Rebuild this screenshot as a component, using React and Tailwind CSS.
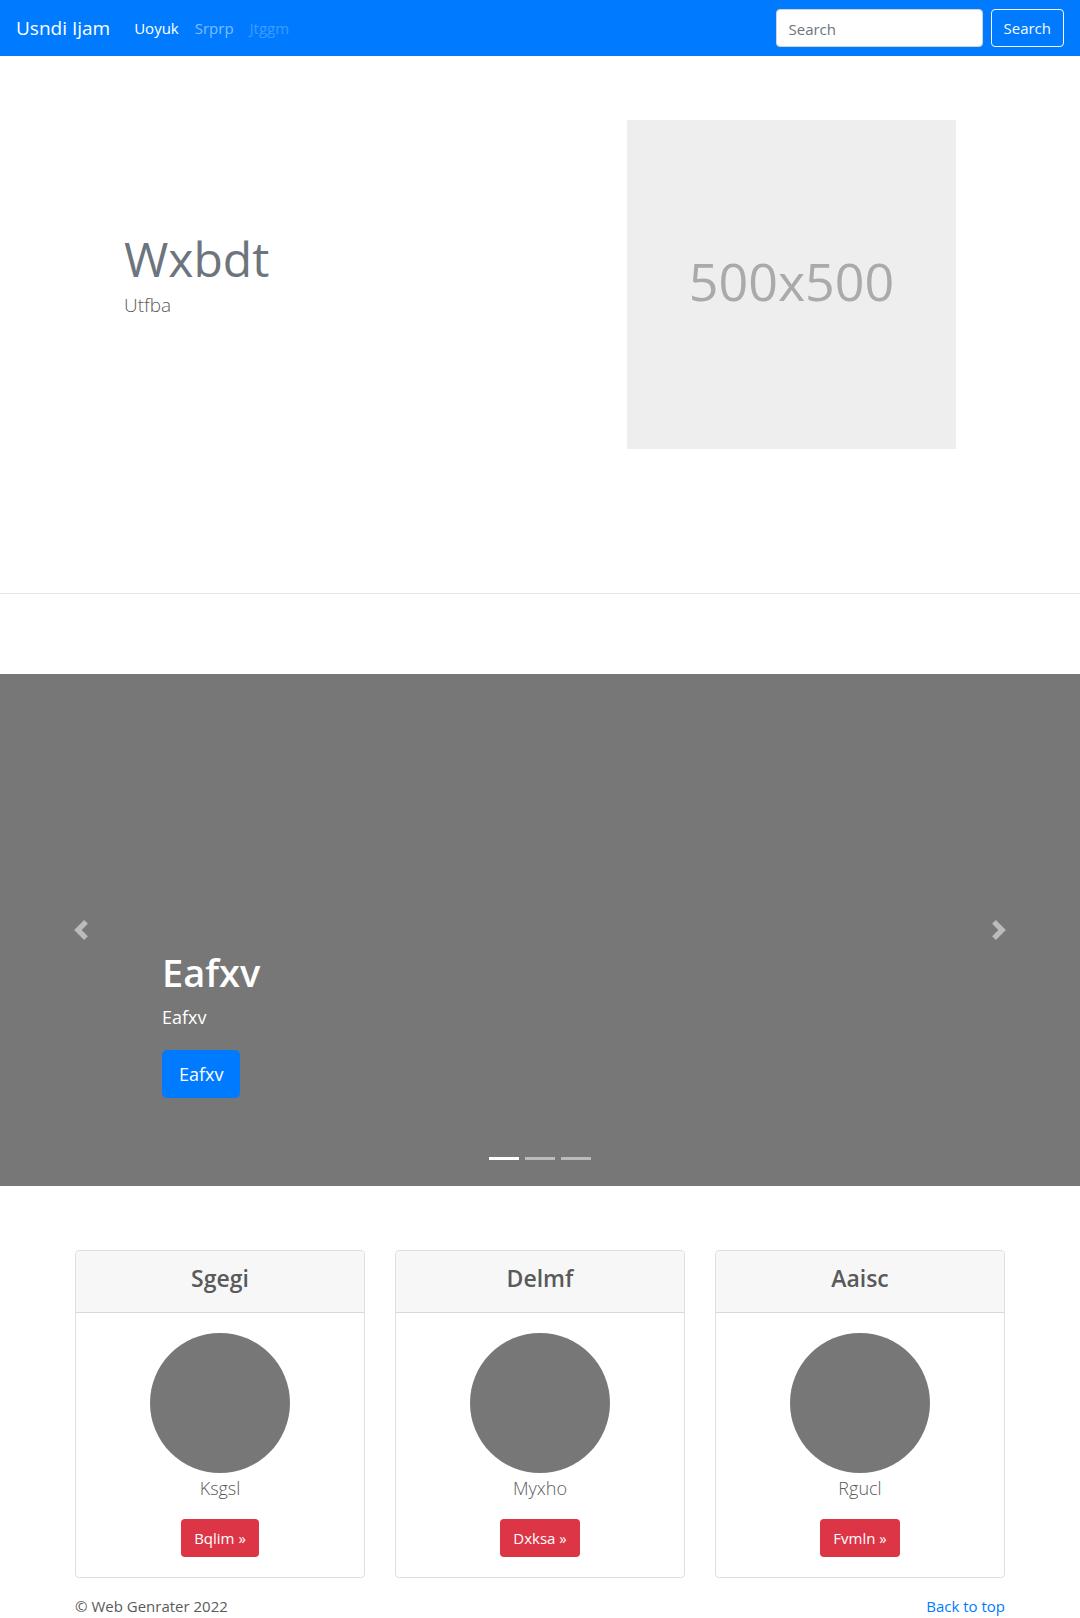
const features = [
  { title: 'Sgegi', text: 'Ksgsl', action: 'Bqlim »' },
  { title: 'Delmf', text: 'Myxho', action: 'Dxksa »' },
  { title: 'Aaisc', text: 'Rgucl', action: 'Fvmln »' },
];

function Navbar() {
  return (
    <nav className="flex h-14 items-center bg-[#007bff] px-4 text-white">
      <a href="#top" className="mr-6 text-[19px] leading-8">Usndi Ijam</a>
      <ul className="flex grow gap-4">
        <li><a href="#uoyuk">Uoyuk</a></li>
        <li><a href="#srprp" className="text-white/50">Srprp</a></li>
        <li><a href="#jtggm" aria-disabled="true" className="text-white/25">Jtggm</a></li>
      </ul>
      <form className="flex gap-2" onSubmit={(e) => e.preventDefault()}>
        <input
          type="search"
          aria-label="Search"
          placeholder="Search"
          className="h-[38px] w-[207px] rounded border border-[#ced4da] bg-white px-3 pt-0.5 text-[#495057] placeholder:text-[#6c757d]"
        />
        <button type="submit" className="h-[38px] rounded border border-[#f8f9fa] px-3 text-[#f8f9fa]">Search</button>
      </form>
    </nav>
  );
}

function Hero() {
  return (
    <section className="mx-auto flex max-w-[930px] items-start justify-between px-[49px] pt-16">
      <div className="pt-[110px]">
        <h1 className="text-[48px] leading-[58px] text-[#6c757d]">Wxbdt</h1>
        <p className="mt-0.5 text-[19px] leading-[30px] font-light">Utfba</p>
      </div>
      <div
        role="img"
        aria-label="500x500"
        className="flex aspect-square w-[329px] items-center justify-center bg-[#eeeeee] text-[52px] leading-none text-[#aaaaaa]"
      >
        <span className="pb-2">500x500</span>
      </div>
    </section>
  );
}

function Chevron({ flip }) {
  return (
    <svg viewBox="0 0 8 8" className="size-5 fill-white" aria-hidden="true">
      {flip ? (
        <path d="M2.75 0l-1.5 1.5 2.5 2.5-2.5 2.5 1.5 1.5 4-4-4-4z" />
      ) : (
        <path d="M5.25 0l-4 4 4 4 1.5-1.5-2.5-2.5 2.5-2.5-1.5-1.5z" />
      )}
    </svg>
  );
}

function Carousel() {
  return (
    <section className="relative flex h-[512px] bg-[#777777] text-white">
      <button type="button" aria-label="Previous" className="flex w-[15%] items-center justify-center opacity-50">
        <Chevron />
      </button>
      <div className="flex grow flex-col items-start justify-end pb-[88px]">
        <h2 className="text-[38px] leading-[48px] font-semibold">Eafxv</h2>
        <p className="mt-1.5 mb-[18px] text-[18px] leading-[30px]">Eafxv</p>
        <a href="#eafxv" className="flex h-12 items-center rounded-[5px] bg-[#007bff] px-[17px] text-[18px]">Eafxv</a>
      </div>
      <button type="button" aria-label="Next" className="flex w-[15%] items-center justify-center opacity-50">
        <Chevron flip />
      </button>
      <div className="absolute inset-x-0 bottom-[26px] flex justify-center gap-1.5">
        <button type="button" aria-label="Slide 1" className="h-[3px] w-[30px] bg-white" />
        <button type="button" aria-label="Slide 2" className="h-[3px] w-[30px] bg-white/50" />
        <button type="button" aria-label="Slide 3" className="h-[3px] w-[30px] bg-white/50" />
      </div>
    </section>
  );
}

function FeatureCard({ title, text, action }) {
  return (
    <article className="overflow-hidden rounded border border-[#dfdfdf] bg-white text-center">
      <h2 className="border-b border-[#d8d8d8] bg-[#f7f7f7] pt-[13px] pb-[19px] text-[23px] leading-[29px] font-semibold">{title}</h2>
      <div className="flex flex-col items-center p-5">
        <div className="size-[140px] rounded-full bg-[#777777]" />
        <p className="mb-4 text-[18px] leading-[30px] font-light">{text}</p>
        <a href="#details" className="flex h-[38px] items-center rounded bg-[#dc3545] px-[13px] text-white">{action}</a>
      </div>
    </article>
  );
}

export default function App() {
  return (
    <div id="top" className="bg-white font-['Open_Sans','Noto_Sans',sans-serif] text-[15px] leading-6 text-[#5a5a5a]">
      <Navbar />
      <main>
        <Hero />
        <hr className="mt-36 mb-20 border-t border-[#e5e5e5]" />
        <Carousel />
        <section className="mx-auto mt-16 grid max-w-[930px] grid-cols-3 gap-[30px]">
          {features.map((f) => <FeatureCard key={f.title} {...f} />)}
        </section>
      </main>
      <footer className="mx-auto mt-4 flex max-w-[930px] justify-between">
        <p>© Web Genrater 2022</p>
        <a href="#top" className="text-[#007bff]">Back to top</a>
      </footer>
    </div>
  );
}
